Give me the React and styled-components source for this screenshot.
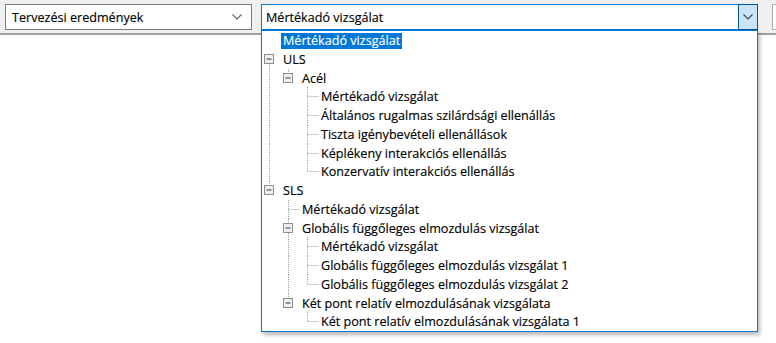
import React from "react";
import styled, { createGlobalStyle } from "styled-components";

const ROW_H = 18.75;
const STEP = 19;
const BASE_X = 7;

const GlobalStyle = createGlobalStyle`
  html, body {
    margin: 0;
    padding: 0;
    background: #ffffff;
    overflow: hidden;
  }
  body {
    font-family: "Open Sans", "Liberation Sans", Arial, sans-serif;
    font-size: 12.6px;
    color: #000000;
    -webkit-text-stroke: 0.15px #000000;
  }
`;

const Page = styled.div`
  position: relative;
  width: 776px;
  height: 343px;
  overflow: hidden;
  background: #ffffff;
`;

const Toolbar = styled.div`
  display: flex;
  align-items: flex-start;
  gap: 9px;
  height: 35px;
  box-sizing: border-box;
  padding: 4px 0 0 5px;
  background: #f0f0f0;
  border-bottom: 2px solid #a0a0a0;
`;

const Combo = styled.div`
  display: flex;
  align-items: center;
  flex: none;
  box-sizing: border-box;
  width: ${(p) => p.width}px;
  height: 26px;
  background: #ffffff;
  border: 1px solid ${(p) => (p.focused ? "#0078d7" : "#7a7a7a")};
`;

const ComboText = styled.span`
  flex: 1;
  padding-left: ${(p) => p.indent || 6}px;
  white-space: nowrap;
  overflow: hidden;
`;

const ComboArrow = styled.div`
  display: flex;
  align-items: center;
  justify-content: center;
  width: 20px;
  align-self: stretch;
  box-sizing: border-box;
  ${(p) =>
    p.pressed
      ? `
    margin: -1px -1px -1px 0;
    background: #cce4f7;
    border: 1px solid #005499;
  `
      : `
    margin-right: 4px;
  `}
`;

const Stub = styled.div`
  flex: none;
  margin-left: 5px;
  width: 4px;
  height: 26px;
  box-sizing: border-box;
  background: #ffffff;
  border: 1px solid #adadad;
  border-right: none;
`;

const Dropdown = styled.div`
  position: absolute;
  left: 261px;
  top: 30px;
  width: 497px;
  height: 302px;
  box-sizing: border-box;
  background: #ffffff;
  border: 1px solid #0078d7;
  box-shadow: 2px 3px 4px rgba(0, 0, 0, 0.28);
  display: flex;
  flex-direction: column;
`;

const Row = styled.div`
  display: flex;
  align-items: center;
  flex: none;
  height: ${(p) => p.h}px;
  white-space: nowrap;
`;

const Label = styled.span`
  display: flex;
  align-items: center;
  height: 16px;
  padding: 0 2px;
  background: ${(p) => (p.selected ? "#0078d7" : "transparent")};
  color: ${(p) => (p.selected ? "#ffffff" : "#000000")};
  -webkit-text-stroke: 0.15px ${(p) => (p.selected ? "#ffffff" : "#000000")};
`;

const Chevron = ({ color = "#606060" }) => (
  <svg width="10" height="6" viewBox="0 0 10 6">
    <path d="M0.5 0.5 L5 5 L9.5 0.5" fill="none" stroke={color} strokeWidth="1.1" />
  </svg>
);

const tree = [
  {
    label: "ULS",
    children: [
      {
        label: "Acél",
        children: [
          { label: "Mértékadó vizsgálat" },
          { label: "Általános rugalmas szilárdsági ellenállás" },
          { label: "Tiszta igénybevételi ellenállások" },
          { label: "Képlékeny interakciós ellenállás" },
          { label: "Konzervatív interakciós ellenállás" },
        ],
      },
    ],
  },
  {
    label: "SLS",
    children: [
      { label: "Mértékadó vizsgálat" },
      {
        label: "Globális függőleges elmozdulás vizsgálat",
        children: [
          { label: "Mértékadó vizsgálat" },
          { label: "Globális függőleges elmozdulás vizsgálat 1" },
          { label: "Globális függőleges elmozdulás vizsgálat 2" },
        ],
      },
      {
        label: "Két pont relatív elmozdulásának vizsgálata",
        children: [{ label: "Két pont relatív elmozdulásának vizsgálata 1" }],
      },
    ],
  },
];

// flatten the tree into rows, keeping which guide lines go through
const flatten = (nodes, depth = 0, guides = [], out = []) => {
  nodes.forEach((node, i) => {
    const last = i === nodes.length - 1;
    out.push({
      label: node.label,
      depth,
      guides,
      first: i === 0,
      last,
      branch: !!node.children,
    });
    if (node.children) flatten(node.children, depth + 1, [...guides, !last], out);
  });
  return out;
};

const rows = [
  { label: "Mértékadó vizsgálat", depth: 0, plain: true, selected: true },
  ...flatten(tree),
];

const dot = { stroke: "#a0a0a0", strokeWidth: 1, strokeDasharray: "1 1" };

const Lines = ({ row, h }) => {
  const w = STEP + STEP * row.depth;
  const mid = Math.floor(h / 2) + 0.5;
  const cx = (l) => BASE_X + STEP * l + 0.5;
  const parts = [];
  if (!row.plain) {
    row.guides.forEach((on, l) => {
      if (on) parts.push(<line key={"g" + l} x1={cx(l)} x2={cx(l)} y1={0} y2={h} style={dot} />);
    });
    const x = cx(row.depth);
    const top = row.depth === 0 && row.first ? mid : 0;
    const bottom = row.last ? mid : h;
    parts.push(<line key="v" x1={x} x2={x} y1={top} y2={bottom} style={dot} />);
    if (row.branch) {
      parts.push(
        <g key="box">
          <rect x={x - 5} y={mid - 5} width={9} height={9} fill="#eeeeee" stroke="#8e8f8f" />
          <line x1={x - 3} x2={x + 2} y1={mid - 0.5} y2={mid - 0.5} stroke="#3b3b3b" />
        </g>
      );
    } else {
      parts.push(<line key="h" x1={x} x2={w} y1={mid} y2={mid} style={dot} />);
    }
  }
  return (
    <svg width={w} height={h} style={{ flex: "none" }}>
      {parts}
    </svg>
  );
};

export default function App() {
  return (
    <Page>
      <GlobalStyle />
      <Toolbar>
        <Combo width={247}>
          <ComboText>Tervezési eredmények</ComboText>
          <ComboArrow>
            <Chevron />
          </ComboArrow>
        </Combo>
        <Combo width={497} focused>
          <ComboText indent={4}>Mértékadó vizsgálat</ComboText>
          <ComboArrow pressed>
            <Chevron color="#404040" />
          </ComboArrow>
        </Combo>
        <Stub />
      </Toolbar>
      <Dropdown>
        {rows.map((row, i) => {
          const h = Math.round((i + 1) * ROW_H) - Math.round(i * ROW_H);
          return (
            <Row key={i} h={h}>
              <Lines row={row} h={h} />
              <Label selected={row.selected}>{row.label}</Label>
            </Row>
          );
        })}
      </Dropdown>
    </Page>
  );
}
